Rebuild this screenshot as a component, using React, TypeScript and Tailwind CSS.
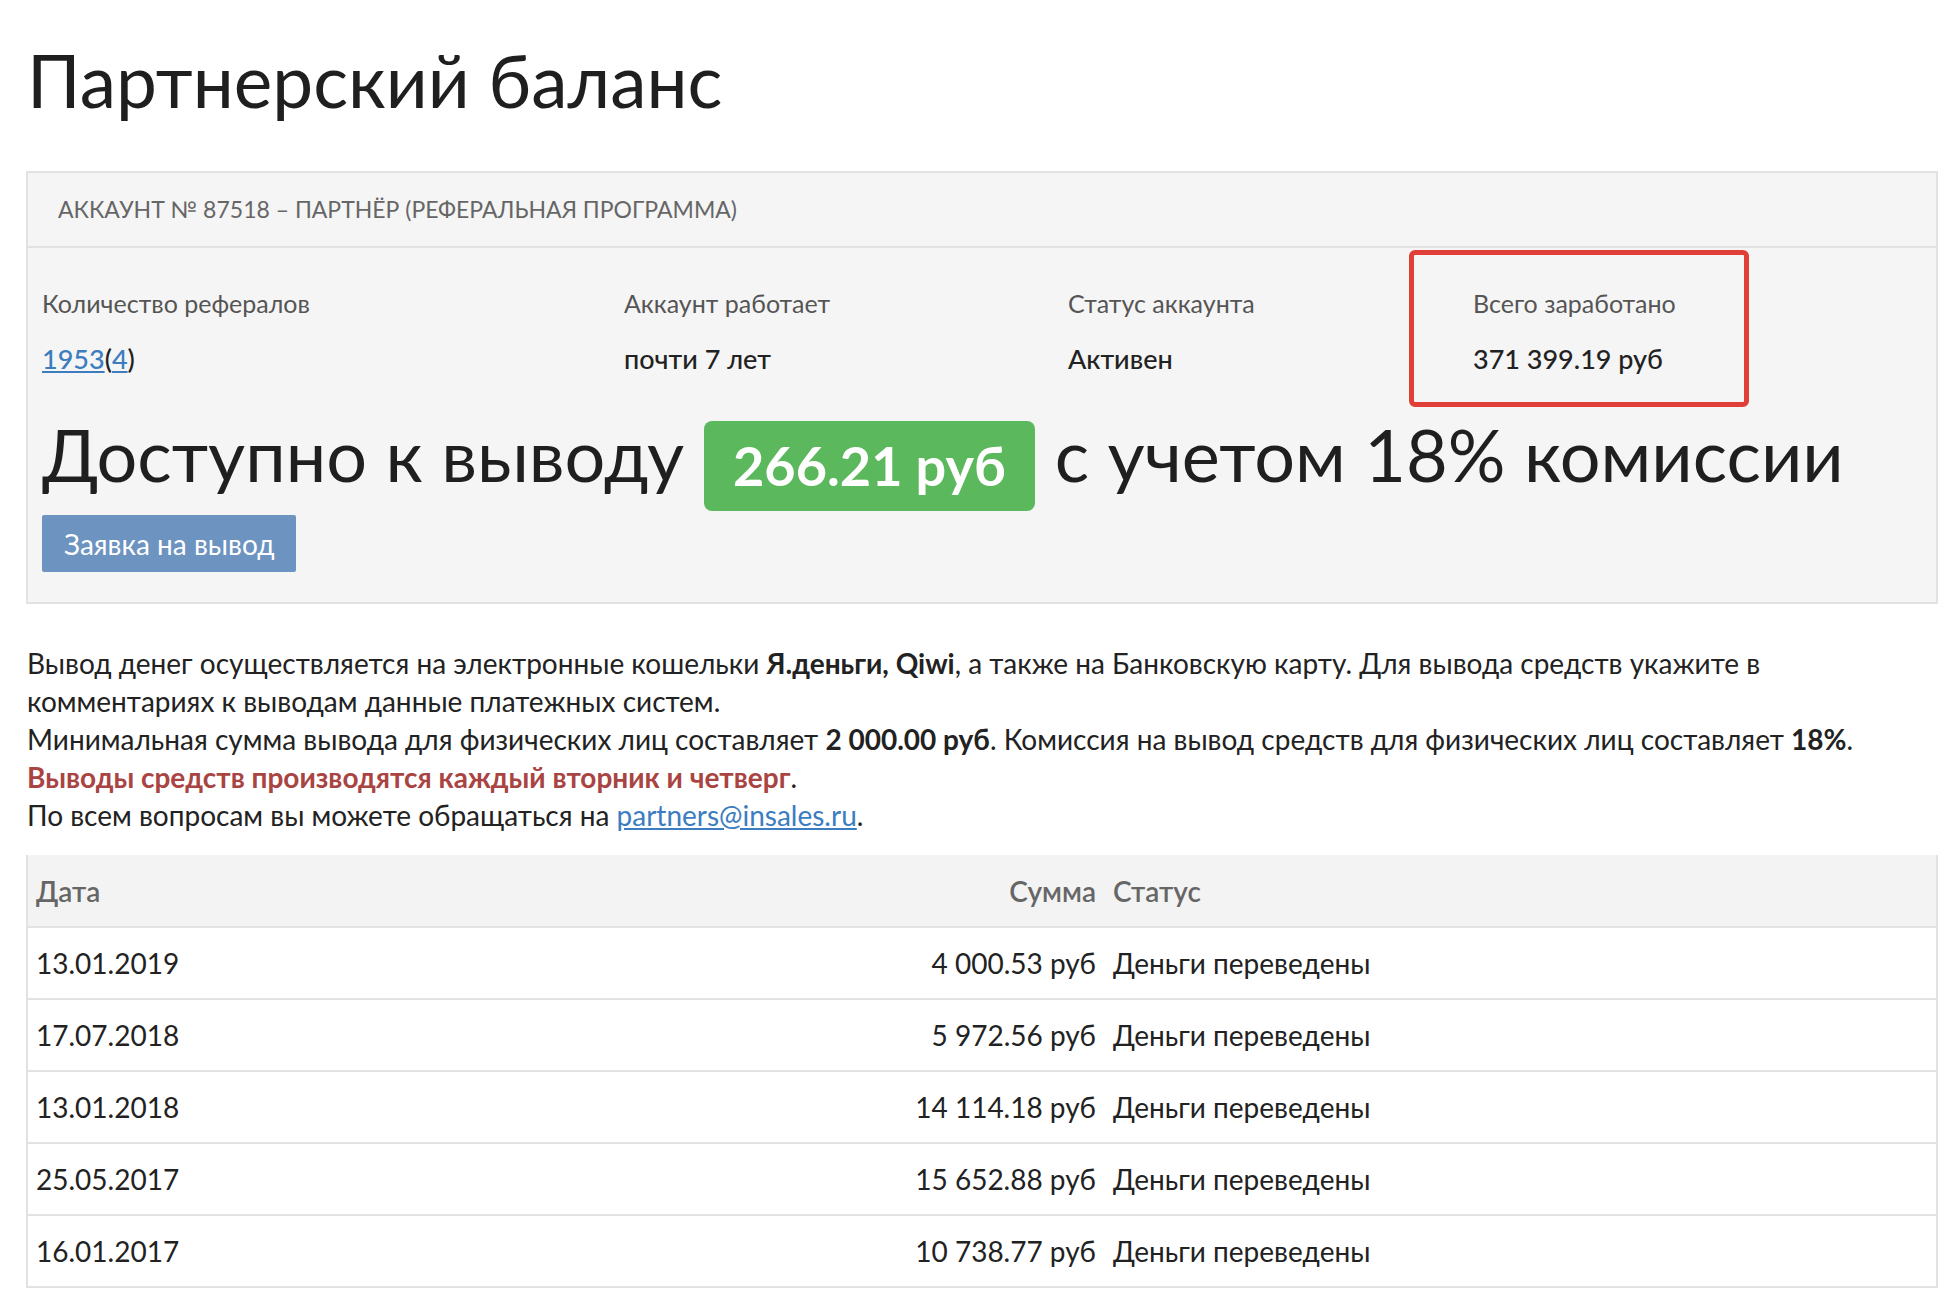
import React from "react";

const payouts = [
  { date: "13.01.2019", sum: "4 000.53 руб", status: "Деньги переведены" },
  { date: "17.07.2018", sum: "5 972.56 руб", status: "Деньги переведены" },
  { date: "13.01.2018", sum: "14 114.18 руб", status: "Деньги переведены" },
  { date: "25.05.2017", sum: "15 652.88 руб", status: "Деньги переведены" },
  { date: "16.01.2017", sum: "10 738.77 руб", status: "Деньги переведены" },
];

const App = () => {
  return (
    <div className="min-h-screen bg-white pl-[26px] pr-[14px] text-[#222] font-['Lato','Open_Sans',sans-serif]">
      {/* Page title */}
      <h1 className="pt-[44px] pl-[1px] text-[73px] leading-none font-normal text-[#1f1f1f]">Партнерский баланс</h1>

      {/* Account panel */}
      <div className="mt-[54px] border-2 border-[#e2e2e2] bg-[#f5f5f5]">
        <div className="h-[75px] flex items-center pl-[30px] border-b-2 border-[#e2e2e2] text-[23px] uppercase text-[#666]">
          Аккаунт № 87518 – Партнёр (реферальная программа)
        </div>

        <div className="px-[14px] pt-[39px] pb-[30px]">
          <div className="grid grid-cols-[582px_444px_405px_1fr]">
            <div>
              <div className="text-[25px] leading-[32px] text-[#555]">Количество рефералов</div>
              <div className="mt-[24px] text-[27px] leading-[32px] font-medium">
                <a href="#" className="text-[#3b7dbf] underline">1953</a>(<a href="#" className="text-[#3b7dbf] underline">4</a>)
              </div>
            </div>
            <div>
              <div className="text-[25px] leading-[32px] text-[#555]">Аккаунт работает</div>
              <div className="mt-[24px] text-[27px] leading-[32px] font-medium">почти 7 лет</div>
            </div>
            <div>
              <div className="text-[25px] leading-[32px] text-[#555]">Статус аккаунта</div>
              <div className="mt-[24px] text-[27px] leading-[32px] font-medium">Активен</div>
            </div>
            <div className="relative">
              <div className="text-[25px] leading-[32px] text-[#555]">Всего заработано</div>
              <div className="mt-[24px] text-[27px] leading-[32px] font-medium">371 399.19 руб</div>
              {/* annotation frame */}
              <div className="absolute left-[-64px] top-[-37px] w-[340px] h-[157px] border-[5px] border-[#df3f37] rounded-[6px]" />
            </div>
          </div>

          <div className="mt-[46px] h-[90px] flex items-center gap-[20px] text-[72px] leading-none text-[#1f1f1f]">
            <span className="mb-[24px]">Доступно к выводу</span>
            <span className="h-[90px] flex items-center px-[29px] rounded-[8px] bg-[#5cb85c] text-white text-[54px] font-bold">
              266.21 руб
            </span>
            <span className="mb-[24px]">с учетом 18% комиссии</span>
          </div>

          <button className="mt-[4px] h-[57px] w-[254px] flex items-center pl-[22px] rounded-[2px] bg-[#6d93c1] text-white text-[28px]">
            Заявка на вывод
          </button>
        </div>
      </div>

      {/* Info text */}
      <div className="mt-[40px] pl-[1px] text-[28px] leading-[38px] text-[#222]">
        <div className="whitespace-nowrap">
          Вывод денег осуществляется на электронные кошельки <b>Я.деньги, Qiwi</b>, а также на Банковскую карту. Для вывода средств укажите в
        </div>
        <div className="whitespace-nowrap">комментариях к выводам данные платежных систем.</div>
        <div className="whitespace-nowrap">
          Минимальная сумма вывода для физических лиц составляет <b>2 000.00 руб</b>. Комиссия на вывод средств для физических лиц составляет <b>18%</b>.
        </div>
        <div className="whitespace-nowrap">
          <b className="text-[#a94442]">Выводы средств производятся каждый вторник и четверг</b>.
        </div>
        <div className="whitespace-nowrap">
          По всем вопросам вы можете обращаться на <a href="#" className="text-[#3b7dbf] underline">partners@insales.ru</a>.
        </div>
      </div>

      {/* Payouts table */}
      <div className="mt-[21px] border-l-2 border-r-2 border-[#e2e2e2]">
        <div className="h-[73px] grid grid-cols-[1fr_200px_832px] items-center bg-[#f3f3f3] border-b-2 border-[#e2e2e2] text-[28px] font-semibold text-[#666]">
          <div className="px-2">Дата</div>
          <div className="px-2 text-right">Сумма</div>
          <div className="px-[9px]">Статус</div>
        </div>
        {payouts.map((row) => (
          <div key={row.date} className="h-[72px] grid grid-cols-[1fr_200px_832px] items-center border-b-2 border-[#e2e2e2] text-[28px] text-[#222]">
            <div className="px-2">{row.date}</div>
            <div className="px-2 text-right">{row.sum}</div>
            <div className="px-[9px]">{row.status}</div>
          </div>
        ))}
      </div>
    </div>
  );
};

export default App;
